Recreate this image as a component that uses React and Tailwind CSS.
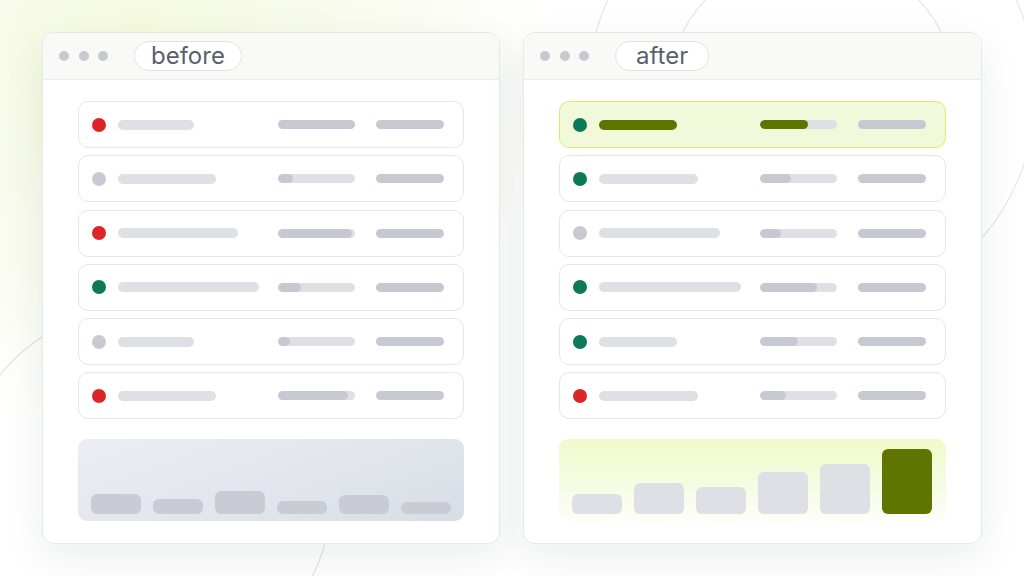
import React from 'react';

const OLIVE = 'bg-[#5f7500]';

const beforeRows = [
  { dot: 'red', label: 76, fill: 77 },
  { dot: 'gray', label: 98, fill: 15 },
  { dot: 'red', label: 120, fill: 74 },
  { dot: 'green', label: 141, fill: 23 },
  { dot: 'gray', label: 76, fill: 12 },
  { dot: 'red', label: 98, fill: 70 },
];

const afterRows = [
  { dot: 'green', label: 78, fill: 48, active: true },
  { dot: 'green', label: 99, fill: 31 },
  { dot: 'gray', label: 121, fill: 21 },
  { dot: 'green', label: 142, fill: 57 },
  { dot: 'green', label: 78, fill: 38 },
  { dot: 'red', label: 99, fill: 26 },
];

const dotColor = {
  red: 'bg-[#dc2626]',
  green: 'bg-[#0c7a56]',
  gray: 'bg-[#c8cad2]',
};

const Row = ({ row }) => (
  <div
    className={`flex h-[47px] items-center rounded-[10px] border pl-[13px] pr-[19px] ${
      row.active ? 'border-[#d6ee6a] bg-[#f2f9da]' : 'border-[#e6e6e2] bg-white'
    }`}
  >
    <span className={`h-[14px] w-[14px] shrink-0 rounded-full ${dotColor[row.dot]}`} />
    <span
      className={`ml-[12px] h-[10px] rounded-full ${row.active ? OLIVE : 'bg-[#dfe0e5]'}`}
      style={{ width: row.label }}
    />
    <div className="flex-1" />
    <div className="h-[9px] w-[77px] overflow-hidden rounded-full bg-[#dfe0e5]">
      <div
        className={`h-full rounded-full ${row.active ? OLIVE : 'bg-[#c6c9d2]'}`}
        style={{ width: row.fill }}
      />
    </div>
    <span className="ml-[21px] h-[9px] w-[68px] rounded-full bg-[#c6c9d2]" />
  </div>
);

const Window = ({ title, rows, wide, children }) => (
  <div
    className={`flex h-[512px] flex-col overflow-hidden rounded-[12px] border border-[#e8e8e4] bg-white shadow-[0_14px_40px_rgba(30,35,50,0.08)] ${
      wide ? 'w-[459px]' : 'w-[458px]'
    }`}
  >
    <div className="flex h-[47px] shrink-0 items-center border-b border-[#ececea] bg-[#f9f9f7] pl-[16px]">
      <span className="h-[10px] w-[10px] rounded-full bg-[#c8cad2]" />
      <span className="ml-[9.5px] h-[10px] w-[10px] rounded-full bg-[#c8cad2]" />
      <span className="ml-[9.5px] h-[10px] w-[10px] rounded-full bg-[#c8cad2]" />
      <span
        className={`ml-[26px] flex h-[30px] items-center rounded-full border border-[#e4e4df] bg-white text-[24px] leading-none text-[#5b5f6e] ${
          wide ? 'px-[20px]' : 'px-[16px]'
        }`}
      >
        {title}
      </span>
    </div>
    <div className="flex flex-col px-[35px] pt-[21px]">
      <div className="flex flex-col gap-[7.3px]">
        {rows.map((r, i) => (
          <Row key={i} row={r} />
        ))}
      </div>
      {children}
    </div>
  </div>
);

const beforeBars = [20, 15, 23, 13, 19, 12];
const afterBars = [20, 31, 27, 42, 50, 65];

export default function App() {
  return (
    <div
      className="relative h-[576px] w-[1024px] overflow-hidden bg-white"
      style={{ fontFamily: 'Inter, "Noto Sans", sans-serif' }}
    >
      <div className="absolute inset-0 bg-[radial-gradient(ellipse_420px_380px_at_140px_60px,#f4fadc_0%,#f8fbec_45%,rgba(255,255,255,0)_100%)]" />
      <svg className="absolute inset-0" width="1024" height="576" fill="none">
        <circle cx="812" cy="98" r="145" stroke="#e6e6e2" strokeWidth="1.2" />
        <circle cx="812" cy="92" r="224" stroke="#e6e6e2" strokeWidth="1.2" />
        <circle cx="145" cy="493" r="187" stroke="#e4e4de" strokeWidth="1.2" />
      </svg>
      <div className="relative flex gap-[23px] pl-[42px] pt-[32px]">
        <Window title="before" rows={beforeRows}>
          <div className="mt-[20px] flex h-[82px] items-end gap-[12px] rounded-[9px] bg-[linear-gradient(160deg,#eaedf2_0%,#e2e6ec_55%,#d8dde5_100%)] px-[13px] pb-[7px]">
            {beforeBars.map((h, i) => (
              <div key={i} className="w-[50px] rounded-[6px] bg-[#c9ccd4]" style={{ height: h }} />
            ))}
          </div>
        </Window>
        <Window title="after" rows={afterRows} wide>
          <div className="mt-[20px] flex h-[82px] items-end gap-[12px] rounded-[9px] bg-[linear-gradient(180deg,#f0facb_0%,#f6fbe2_55%,#fdfef9_100%)] px-[13px] pb-[7px]">
            {afterBars.map((h, i) => (
              <div
                key={i}
                className={`w-[50px] rounded-[6px] ${i === 5 ? OLIVE : 'bg-[#dfe0e5]'}`}
                style={{ height: h }}
              />
            ))}
          </div>
        </Window>
      </div>
    </div>
  );
}
